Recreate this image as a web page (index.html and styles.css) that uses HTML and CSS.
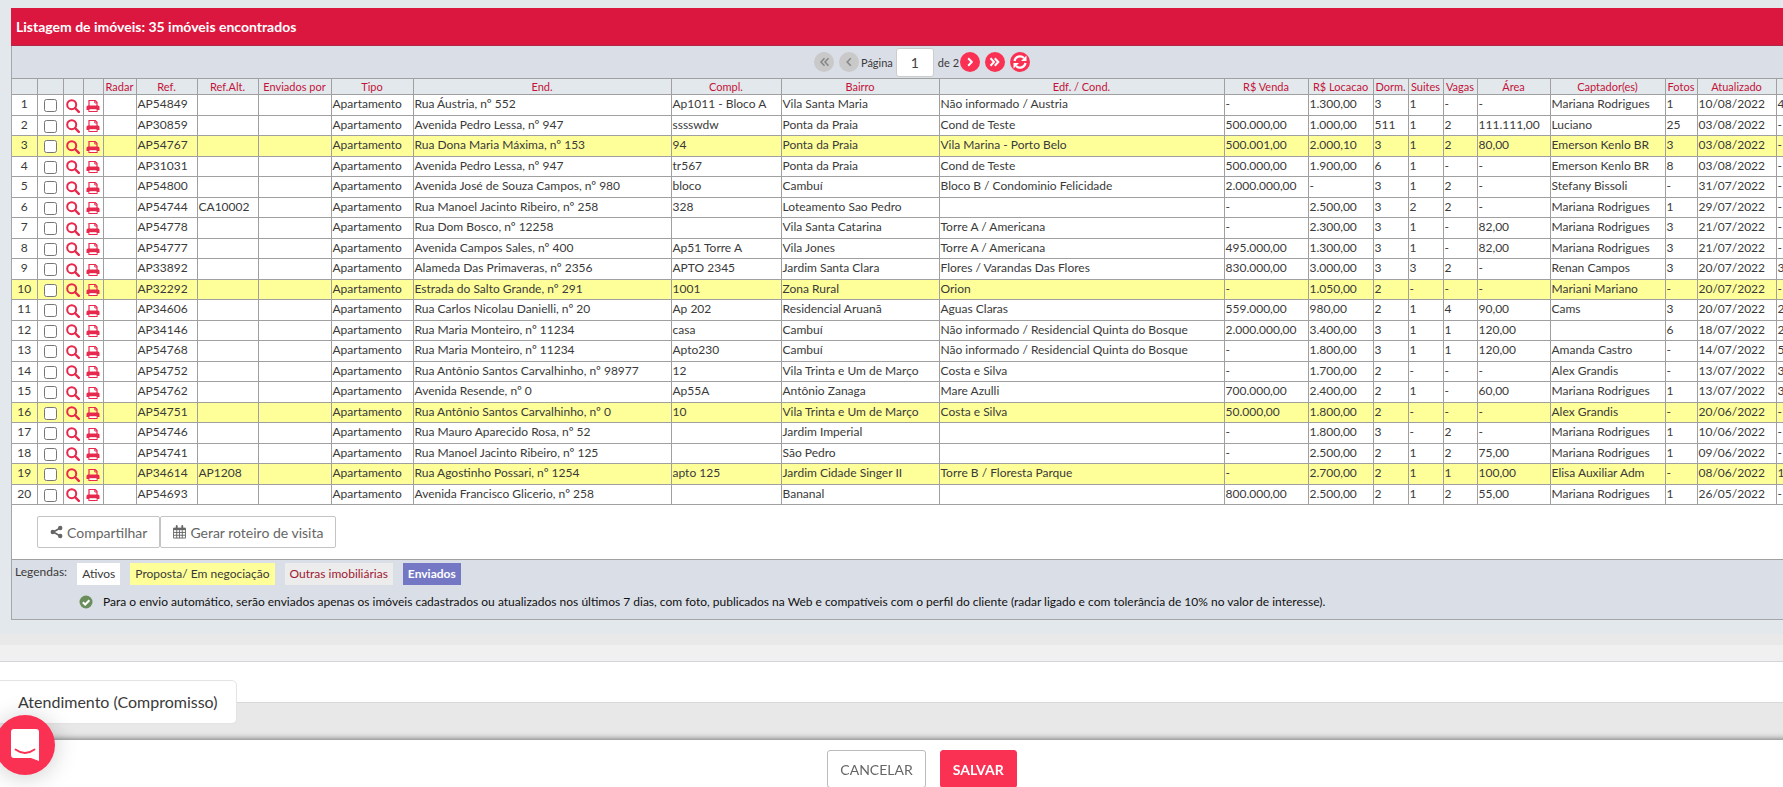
FILE: index.html
```html
<!DOCTYPE html>
<html lang="pt-BR">
<head>
<meta charset="utf-8">
<title>Listagem de imóveis</title>
<link rel="stylesheet" href="styles.css">
</head>
<body>

<svg class="sprite" aria-hidden="true">
  <symbol id="i-search" viewBox="0 0 14 14"><circle cx="5.7" cy="5.7" r="4.5" fill="none" stroke="currentColor" stroke-width="2"/><path d="M9 9l3.8 3.8" stroke="currentColor" stroke-width="2.4" stroke-linecap="round"/></symbol>
  <symbol id="i-print" viewBox="0 0 14 14"><path d="M3 7V1.5h6.2L11 3.3V7M3 9.5v3h8v-3" fill="none" stroke="currentColor" stroke-width="1.2"/><path d="M8.8 1.500V4H11" fill="none" stroke="currentColor"/><path d="M2 6.500h10a1.500 1.500 0 0 1 1.500 1.500v3H.5V8A1.500 1.500 0 0 1 2 6.500z" fill="currentColor"/><path d="M3.500 10.200h7v1.800h-7z" fill="#fff"/></symbol>
  <symbol id="i-share" viewBox="0 0 14 14"><path d="M11 2.800L3.500 7l7.500 4.200" fill="none" stroke="currentColor" stroke-width="1.800"/><circle cx="11" cy="2.800" r="2.400" fill="currentColor"/><circle cx="3" cy="7" r="2.400" fill="currentColor"/><circle cx="11" cy="11.200" r="2.400" fill="currentColor"/></symbol>
  <symbol id="i-calendar" viewBox="0 0 14 14"><path d="M.5 3h13v10.500H.5zM.5 7.500h13M.5 10.500h13M4 5v8.500M7 5v8.500M10 5v8.500" fill="none" stroke="currentColor"/><path d="M.5 2.500h13V5H.5z" fill="currentColor"/><path d="M4 .5v3M10 .5v3" stroke="currentColor" stroke-width="2" stroke-linecap="round"/></symbol>
  <symbol id="i-prev" viewBox="0 0 20 20"><path d="M11.800 6.200L8.200 10l3.600 3.800" fill="none" stroke="currentColor" stroke-width="1.600"/></symbol>
  <symbol id="i-first" viewBox="0 0 20 20"><path d="M10.500 6.200L7 10l3.500 3.800M14.500 6.200L11 10l3.500 3.800" fill="none" stroke="currentColor" stroke-width="1.600"/></symbol>
  <symbol id="i-next" viewBox="0 0 20 20"><path d="M8.200 6.200L11.800 10l-3.600 3.800" fill="none" stroke="currentColor" stroke-width="2"/></symbol>
  <symbol id="i-last" viewBox="0 0 20 20"><path d="M5.500 6.200L9 10l-3.500 3.800M9.800 6.200l3.500 3.800-3.500 3.800" fill="none" stroke="currentColor" stroke-width="2"/></symbol>
  <symbol id="i-refresh" viewBox="0 0 20 20"><path d="M4.500 9A5.600 5.600 0 0 1 14 6M15.500 11A5.600 5.600 0 0 1 6 14" fill="none" stroke="currentColor" stroke-width="2.200"/><path d="M16.500 3.500V9H11zM3.500 16.500V11H9z" fill="currentColor"/></symbol>
  <symbol id="i-check" viewBox="0 0 14 14"><circle cx="7" cy="7" r="6.500" fill="#6a8d5c"/><path d="M3.800 7.200L6.200 9.500l4.200-4.300" fill="none" stroke="#fff" stroke-width="2"/></symbol>
  <symbol id="i-chat" viewBox="0 0 28 32"><path d="M3 0h22a3 3 0 0 1 3 3v29l-8-3H3a3 3 0 0 1-3-3V3a3 3 0 0 1 3-3z" fill="currentColor"/><path d="M4.500 20.500Q14 27.500 23.500 20.500" fill="none" stroke="#fb3154" stroke-width="1.800" stroke-linecap="round"/></symbol>
</svg>

<main class="page">
  <section class="listing">
    <div class="panel">
      <h2 class="panel-title">Listagem de imóveis: 35 imóveis encontrados</h2>

      <div class="pager">
        <button class="round" type="button" disabled aria-label="Primeira"><svg><use href="#i-first"/></svg></button>
        <button class="round" type="button" disabled aria-label="Anterior"><svg><use href="#i-prev"/></svg></button>
        <label class="pager-page" for="pagina">Página</label>
        <input class="pager-input" id="pagina" type="text" value="1">
        <span class="pager-total">de 2</span>
        <button class="round" type="button" aria-label="Próxima"><svg><use href="#i-next"/></svg></button>
        <button class="round" type="button" aria-label="Última"><svg><use href="#i-last"/></svg></button>
        <button class="round" type="button" aria-label="Atualizar"><svg><use href="#i-refresh"/></svg></button>
      </div>

      <table class="grid">
        <colgroup>
          <col class="c-num"><col class="c-check"><col class="c-icon"><col class="c-icon">
          <col class="c-radar"><col class="c-ref"><col class="c-ref"><col class="c-sent">
          <col class="c-type"><col class="c-addr"><col class="c-compl"><col class="c-area">
          <col class="c-building"><col class="c-sale"><col class="c-rent"><col class="c-count">
          <col class="c-count"><col class="c-vagas"><col class="c-size"><col class="c-agent">
          <col class="c-photos"><col class="c-date"><col>
        </colgroup>
        <thead>
          <tr>
            <th></th><th></th><th></th><th></th><th>Radar</th><th>Ref.</th><th>Ref.Alt.</th><th>Enviados por</th>
            <th>Tipo</th><th>End.</th><th>Compl.</th><th>Bairro</th><th>Edf. / Cond.</th><th>R$ Venda</th>
            <th>R$ Locacao</th><th>Dorm.</th><th>Suites</th><th>Vagas</th><th>Área</th><th>Captador(es)</th>
            <th>Fotos</th><th>Atualizado</th><th></th>
          </tr>
        </thead>
        <tbody id="imoveis"></tbody>
      </table>

      <div class="actions">
        <button class="action" type="button"><svg><use href="#i-share"/></svg>Compartilhar</button>
        <button class="action" type="button"><svg><use href="#i-calendar"/></svg>Gerar roteiro de visita</button>
      </div>

      <div class="legend">
        <div class="legend-row">
          <span class="legend-label">Legendas:</span>
          <span class="tag tag-active">Ativos</span>
          <span class="tag tag-proposal">Proposta/ Em negociação</span>
          <span class="tag tag-other">Outras imobiliárias</span>
          <span class="tag tag-sent">Enviados</span>
        </div>
        <p class="note"><svg><use href="#i-check"/></svg>Para o envio automático, serão enviados apenas os imóveis cadastrados ou atualizados nos últimos 7 dias, com foto, publicados na Web e compatíveis com o perfil do cliente (radar ligado e com tolerância de 10% no valor de interesse).</p>
      </div>
    </div>
  </section>

  <div class="band"></div>

  <section class="service">
    <h3 class="service-tab">Atendimento (Compromisso)</h3>
    <div class="service-body"></div>
  </section>
</main>

<footer class="bar">
  <button class="btn" type="button">CANCELAR</button>
  <button class="btn btn-save" type="button">SALVAR</button>
</footer>

<button class="chat" type="button" aria-label="Chat"><svg><use href="#i-chat"/></svg></button>

<script src="script.js"></script>
</body>
</html>
```
FILE: styles.css
```css
* {
  box-sizing: border-box;
}

body {
  margin: 0;
  height: 100vh;
  overflow: hidden;
  background: #fff;
  color: #3a3a3a;
  font-family: Lato, "Open Sans", sans-serif;
  font-size: 12px;
}

button, input {
  font-family: inherit;
}

.sprite {
  display: none;
}

/* the grid is wider than most windows, the rest is cut off */
.page {
  min-width: 1844px;
}

.listing {
  padding: 8px 11px 14px;
  background: #e2e8ec;
}

.panel {
  border: 1px solid #a4a6aa;
  border-top: 0;
  background: #fff;
}

.panel-title {
  margin: 0 -1px;
  padding: 0 5px;
  height: 38px;
  border-bottom: 1px solid #b02846;
  background: #dc173f;
  color: #fff;
  font-size: 14px;
  font-weight: bold;
  line-height: 37px;
}

.pager {
  display: flex;
  align-items: center;
  justify-content: center;
  height: 32px;
  background: #dadee6;
}

.round {
  width: 20px;
  height: 20px;
  margin-right: 5px;
  padding: 0;
  border: 0;
  border-radius: 50%;
  background: #fb3154;
  color: #fff;
}

.round svg {
  display: block;
  width: 20px;
  height: 20px;
}

.round:disabled {
  background: #c9c9ca;
  color: #888;
}

.round:last-child {
  margin-right: 0;
}

.pager-page,
.pager-total {
  font-size: 11px;
}

.pager-page {
  margin: 0 3px 0 -3px;
}

.pager-input {
  width: 38px;
  height: 29px;
  padding: 0;
  border: 1px solid #ccc;
  border-radius: 3px;
  background: #fff;
  color: #444;
  font-size: 14px;
  text-align: center;
}

.pager-total {
  margin: 0 1px 0 4px;
}

/* grid */
.grid {
  width: 100%;
  border-collapse: collapse;
  table-layout: fixed;
}

.c-num { width: 25px; }
.c-check { width: 26px; }
.c-icon { width: 20px; }
.c-radar { width: 33px; }
.c-ref { width: 61px; }
.c-sent { width: 73px; }
.c-type { width: 82px; }
.c-addr { width: 258px; }
.c-compl { width: 110px; }
.c-area { width: 158px; }
.c-building { width: 285px; }
.c-sale { width: 84px; }
.c-rent { width: 65px; }
.c-count { width: 35px; }
.c-vagas { width: 34px; }
.c-size { width: 73px; }
.c-agent { width: 115px; }
.c-photos { width: 32px; }
.c-date { width: 79px; }

.grid th,
.grid td {
  padding: 0 0 2px 1px;
  border: 1px solid #a0a0a0;
  overflow: hidden;
  line-height: 16px;
  white-space: nowrap;
}

.grid th:first-child,
.grid td:first-child {
  border-left: 0;
}

.grid th {
  height: 16px;
  padding: 0;
  background: #e2e8ec;
  color: #c4143a;
  font-size: 11px;
  font-weight: normal;
  line-height: 15px;
  text-align: center;
}

.grid td {
  height: 20px;
  text-align: left;
}

.grid tr:nth-child(odd) td {
  height: 21px;
}

.grid .mid {
  padding: 0 0 2px;
  text-align: center;
}

.grid .proposal td {
  background: #ffff99;
}

.grid input {
  display: block;
  width: 13px;
  height: 13px;
  margin: 3px auto 0;
}

.grid a {
  display: block;
  color: #e8284c;
}

.grid a svg {
  display: block;
  width: 14px;
  height: 14px;
  margin: 3px auto 0;
}

.actions {
  display: flex;
  padding: 11px 25px;
}

.action {
  display: flex;
  align-items: center;
  height: 32px;
  padding: 0 12px;
  border: 1px solid #c4c4c4;
  border-radius: 2px;
  background: #fff;
  color: #666;
  font-size: 14px;
}

.action svg {
  width: 13px;
  height: 14px;
  margin-right: 4px;
}

/* legend */
.legend {
  height: 60px;
  border-top: 1px solid #a0a0a0;
  background: #dadee6;
}

.legend-row {
  display: flex;
  gap: 10px;
  padding: 3px;
}

.legend-label {
  line-height: 18px;
}

.tag {
  padding: 0 5px;
  line-height: 22px;
}

.tag-active { background: #fff; }
.tag-proposal { background: #ffff99; }
.tag-other { background: #ececec; color: #a01830; }
.tag-sent { background: #7478c4; color: #fff; font-weight: bold; }

.note {
  display: flex;
  align-items: center;
  margin: 6px 0 0 67px;
  color: #111;
  line-height: 16px;
}

.note svg {
  width: 14px;
  height: 14px;
  margin-right: 10px;
}

.band {
  height: 28px;
  border-top: 11px solid #e9e9e9;
  border-bottom: 1px solid #d4d4d8;
  background: #f0f0f0;
}

.service {
  padding-top: 18px;
}

.service-tab {
  position: relative;
  width: max-content;
  margin: 0 0 -22px -6px;
  padding: 0 19px 0 23px;
  border: 1px solid #e4e4e4;
  border-radius: 5px;
  background: #fff;
  font-size: 16px;
  font-weight: normal;
  line-height: 42px;
}

.service-body {
  height: 100px;
  border-top: 1px solid #d8d8d8;
  background: #e8e8e8;
}

/* fixed bar with the form buttons */
.bar {
  position: fixed;
  bottom: 0;
  left: 0;
  display: flex;
  justify-content: center;
  gap: 14px;
  width: 100%;
  min-width: 1844px;
  height: 47px;
  padding-top: 10px;
  background: #fff;
  box-shadow: 0 0 6px 1px rgba(0, 0, 0, .5);
}

.btn {
  height: 38px;
  padding: 0 12px;
  border: 1px solid #bbb;
  border-radius: 3px;
  background: #fff;
  color: #666;
  font-size: 14px;
}

.btn-save {
  border-color: #fb3154;
  background: #fb3154;
  color: #fff;
  font-weight: bold;
}

.chat {
  position: fixed;
  bottom: 12px;
  left: -5px;
  width: 60px;
  height: 60px;
  padding: 0;
  border: 0;
  border-radius: 50%;
  background: #fb3154;
  color: #fff;
  box-shadow: 0 2px 24px rgba(0, 0, 0, .2);
}

.chat svg {
  display: block;
  width: 28px;
  height: 32px;
  margin: 0 auto;
}
```
FILE: script.js
```js
// ref | ref.alt | end. | compl. | bairro | edf. | venda | locacao | dorm. | suites | vagas | area | captador | fotos | atualizado | extra
var rows = [
  'AP54849||Rua Áustria, nº 552|Ap1011 - Bloco A|Vila Santa Maria|Não informado / Austria|-|1.300,00|3|1|-|-|Mariana Rodrigues|1|10/08/2022|4',
  'AP30859||Avenida Pedro Lessa, nº 947|sssswdw|Ponta da Praia|Cond de Teste|500.000,00|1.000,00|511|1|2|111.111,00|Luciano|25|03/08/2022|-',
  'AP54767||Rua Dona Maria Máxima, nº 153|94|Ponta da Praia|Vila Marina - Porto Belo|500.001,00|2.000,10|3|1|2|80,00|Emerson Kenlo BR|3|03/08/2022|-',
  'AP31031||Avenida Pedro Lessa, nº 947|tr567|Ponta da Praia|Cond de Teste|500.000,00|1.900,00|6|1|-|-|Emerson Kenlo BR|8|03/08/2022|-',
  'AP54800||Avenida José de Souza Campos, nº 980|bloco|Cambuí|Bloco B / Condominio Felicidade|2.000.000,00|-|3|1|2|-|Stefany Bissoli|-|31/07/2022|-',
  'AP54744|CA10002|Rua Manoel Jacinto Ribeiro, nº 258|328|Loteamento Sao Pedro||-|2.500,00|3|2|2|-|Mariana Rodrigues|1|29/07/2022|-',
  'AP54778||Rua Dom Bosco, nº 12258||Vila Santa Catarina|Torre A / Americana|-|2.300,00|3|1|-|82,00|Mariana Rodrigues|3|21/07/2022|-',
  'AP54777||Avenida Campos Sales, nº 400|Ap51 Torre A|Vila Jones|Torre A / Americana|495.000,00|1.300,00|3|1|-|82,00|Mariana Rodrigues|3|21/07/2022|-',
  'AP33892||Alameda Das Primaveras, nº 2356|APTO 2345|Jardim Santa Clara|Flores / Varandas Das Flores|830.000,00|3.000,00|3|3|2|-|Renan Campos|3|20/07/2022|3',
  'AP32292||Estrada do Salto Grande, nº 291|1001|Zona Rural|Orion|-|1.050,00|2|-|-|-|Mariani Mariano|-|20/07/2022|-',
  'AP34606||Rua Carlos Nicolau Danielli, nº 20|Ap 202|Residencial Aruanã|Aguas Claras|559.000,00|980,00|2|1|4|90,00|Cams|3|20/07/2022|2',
  'AP34146||Rua Maria Monteiro, nº 11234|casa|Cambuí|Não informado / Residencial Quinta do Bosque|2.000.000,00|3.400,00|3|1|1|120,00||6|18/07/2022|2',
  'AP54768||Rua Maria Monteiro, nº 11234|Apto230|Cambuí|Não informado / Residencial Quinta do Bosque|-|1.800,00|3|1|1|120,00|Amanda Castro|-|14/07/2022|5',
  'AP54752||Rua Antônio Santos Carvalhinho, nº 98977|12|Vila Trinta e Um de Março|Costa e Silva|-|1.700,00|2|-|-|-|Alex Grandis|-|13/07/2022|3',
  'AP54762||Avenida Resende, nº 0|Ap55A|Antônio Zanaga|Mare Azulli|700.000,00|2.400,00|2|1|-|60,00|Mariana Rodrigues|1|13/07/2022|3',
  'AP54751||Rua Antônio Santos Carvalhinho, nº 0|10|Vila Trinta e Um de Março|Costa e Silva|50.000,00|1.800,00|2|-|-|-|Alex Grandis|-|20/06/2022|-',
  'AP54746||Rua Mauro Aparecido Rosa, nº 52||Jardim Imperial||-|1.800,00|3|-|2|-|Mariana Rodrigues|1|10/06/2022|-',
  'AP54741||Rua Manoel Jacinto Ribeiro, nº 125||São Pedro||-|2.500,00|2|1|2|75,00|Mariana Rodrigues|1|09/06/2022|-',
  'AP34614|AP1208|Rua Agostinho Possari, nº 1254|apto 125|Jardim Cidade Singer II|Torre B / Floresta Parque|-|2.700,00|2|1|1|100,00|Elisa Auxiliar Adm|-|08/06/2022|1',
  'AP54693||Avenida Francisco Glicerio, nº 258||Bananal||800.000,00|2.500,00|2|1|2|55,00|Mariana Rodrigues|1|26/05/2022|-'
];

// rows with a proposal in progress
var proposals = [3, 10, 16, 19];

var html = '';
rows.forEach(function(row, i) {
  var n = i + 1, f = row.split('|');
  // radar is empty; sent by and type come after ref.alt
  var cells = ['', f[0], f[1], '', 'Apartamento'].concat(f.slice(2));
  html += '<tr' + (proposals.indexOf(n) > -1 ? ' class="proposal"' : '') + '>' +
    '<td class="mid">' + n + '</td>' +
    '<td class="mid"><input type="checkbox" aria-label="Selecionar ' + f[0] + '"></td>' +
    '<td class="mid"><a href="#" aria-label="Ver ' + f[0] + '"><svg><use href="#i-search"/></svg></a></td>' +
    '<td class="mid"><a href="#" aria-label="Imprimir ' + f[0] + '"><svg><use href="#i-print"/></svg></a></td>' +
    cells.map(function(c) { return '<td>' + c + '</td>'; }).join('') +
    '</tr>';
});
document.getElementById('imoveis').innerHTML = html;
```
